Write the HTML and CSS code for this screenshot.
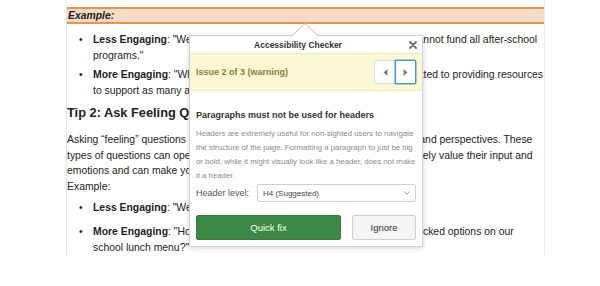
FILE: index.html
```html
<!DOCTYPE html>
<html lang="en">
<head>
<meta charset="utf-8">
<title>Accessibility Checker</title>
<link rel="stylesheet" href="styles.css">
</head>
<body>
<div class="page">
  <div class="example-bar">Example:</div>
  <ul class="tips first">
    <li><b>Less Engaging</b>: "We have very limited resources this fall, and so we cannot fund all after-school<br>programs."</li>
    <li><b>More Engaging</b>: "While our school budget is limited, we are still committed to providing resources<br>to support as many after-school programs as possible."</li>
  </ul>
  <h3 class="tip-title">Tip 2: Ask Feeling Questions</h3>
  <p class="lead">Asking “feeling” questions inspires people to openly share their own feelings and perspectives. These<br>types of questions can open up a real conversation and show that you genuinely value their input and<br>emotions and can make you feel more understood.</p>
  <p class="example-label">Example:</p>
  <ul class="tips second">
    <li><b>Less Engaging</b>: "We want to hear your thoughts on lunch."</li>
    <li><b>More Engaging</b>: "How would you really feel about any of the recently picked options on our<br>school lunch menu?"</li>
  </ul>
</div>

<div class="balloon">
  <svg class="balloon-arrow" width="28" height="14" viewBox="0 0 28 14">
    <polygon points="0,13.5 14,0.6 28,13.5 28,14 0,14" fill="#ffffff"/>
    <polyline points="0,13.5 14,0.6 28,13.5" fill="none" stroke="#bdbdbd" stroke-width="1"/>
  </svg>
  <div class="balloon-head">
    <span class="balloon-title">Accessibility Checker</span>
    <span class="balloon-close">
      <svg width="8" height="8" viewBox="0 0 8 8"><path d="M1 1 L7 7 M7 1 L1 7" stroke="#6e6e6e" stroke-width="1.8" stroke-linecap="round"/></svg>
    </span>
  </div>
  <div class="issue-bar">
    <span class="issue-label">Issue 2 of 3 (warning)</span>
    <div class="issue-nav">
      <button class="nav-btn prev" type="button">
        <svg width="5" height="7" viewBox="0 0 5 7"><polygon points="4.5,0 4.5,7 0.5,3.5" fill="#7d8062"/></svg>
      </button>
      <button class="nav-btn next" type="button">
        <svg width="5" height="7" viewBox="0 0 5 7"><polygon points="0.5,0 0.5,7 4.5,3.5" fill="#7d8062"/></svg>
      </button>
    </div>
  </div>
  <div class="balloon-body">
    <h4 class="issue-title">Paragraphs must not be used for headers</h4>
    <p class="issue-desc">Headers are extremely useful for non-sighted users to navigate<br>the structure of the page. Formatting a paragraph to just be big<br>or bold, while it might visually look like a header, does not make<br>it a header.</p>
    <div class="field">
      <span class="field-label">Header level:</span>
      <div class="select">
        <span>H4 (Suggested)</span>
        <svg width="6" height="4" viewBox="0 0 6 4"><polyline points="0.5,0.5 3,3 5.5,0.5" fill="none" stroke="#9a9a9a" stroke-width="0.9"/></svg>
      </div>
    </div>
    <div class="actions">
      <button class="btn btn-primary" type="button">Quick fix</button>
      <button class="btn btn-secondary" type="button">Ignore</button>
    </div>
  </div>
</div>
</body>
</html>
```
FILE: styles.css
```css
html, body {
  margin: 0;
  padding: 0;
  background: #ffffff;
}

body {
  font-family: "Liberation Sans", Arial, Helvetica, sans-serif;
  color: #222222;
  width: 600px;
  height: 286px;
  overflow: hidden;
}

.page {
  box-sizing: border-box;
  margin-left: 66px;
  width: 479px;
  height: 255px;
  padding-top: 7px;
  border-left: 1px solid #e6e6e6;
  border-right: 1px solid #ebebeb;
  font-size: 10.4px;
  white-space: nowrap;
  overflow: hidden;
}

.example-bar {
  height: 13px;
  line-height: 13px;
  padding-left: 1px;
  background: #f6dcc6;
  border-top: 2px solid #e8924c;
  border-bottom: 2px solid #e8924c;
  font-weight: bold;
  font-style: italic;
}

.tips {
  margin: 8px 0 0;
  padding-left: 26px;
}

.tips li {
  line-height: 16px;
}

.tips li::marker {
  content: "\2022\2003";
}

.first li + li {
  margin-top: 3px;
}

.tip-title {
  margin: 6px 0 0;
  font-size: 12.8px;
  line-height: 16px;
  font-weight: bold;
}

.lead {
  margin: 11px 0 0;
  line-height: 15.5px;
}

.example-label {
  margin: 0;
  line-height: 15.5px;
}

.second {
  margin-top: 5.5px;
}

.second li + li {
  margin-top: 8px;
}

/* Balloon */
.balloon {
  position: absolute;
  left: 189px;
  top: 35px;
  width: 234px;
  box-sizing: border-box;
  background: #ffffff;
  border: 1px solid #d2d2d2;
  box-shadow: 0 1px 5px rgba(0, 0, 0, 0.18);
  font-family: "Liberation Sans", Arial, Helvetica, sans-serif;
}

.balloon-arrow {
  position: absolute;
  left: 101px;
  top: -13px;
  display: block;
}

.balloon-head {
  display: flex;
  align-items: center;
  height: 17px;
}

.balloon-title {
  flex: 1;
  text-align: center;
  font-size: 8.5px;
  font-weight: bold;
  color: #333333;
}

.balloon-close {
  width: 14px;
  margin-right: 2px;
  display: flex;
  justify-content: center;
  align-items: center;
}

.balloon-close svg {
  display: block;
}

.issue-bar {
  box-sizing: border-box;
  height: 38px;
  display: flex;
  align-items: center;
  justify-content: space-between;
  padding: 0 6px;
  background: #fbf6d4;
  border-top: 1px solid #efe7c3;
  border-bottom: 1px solid #efe7c3;
}

.issue-label {
  font-size: 9px;
  font-weight: bold;
  color: #8b7e3e;
}

.issue-nav {
  display: flex;
}

.nav-btn {
  box-sizing: border-box;
  width: 21px;
  height: 24px;
  margin: 0;
  padding: 0;
  display: flex;
  align-items: center;
  justify-content: center;
  background: #ffffff;
  border: 1px solid #dddddd;
}

.nav-btn svg {
  display: block;
}

.nav-btn.prev {
  border-right: none;
  border-radius: 2px 0 0 2px;
}

.nav-btn.next {
  border: 1px solid #4f93cf;
  border-radius: 0 2px 2px 0;
  box-shadow: 0 0 0 0.5px #4f93cf;
}

.balloon-body {
  padding: 0 6px 6px;
}

.issue-title {
  margin: 18px 0 0;
  font-size: 9px;
  line-height: 12px;
  font-weight: bold;
  color: #333333;
}

.issue-desc {
  margin: 6px 0 0;
  font-size: 7.8px;
  line-height: 14px;
  color: #8a8a8a;
  white-space: nowrap;
}

.field {
  display: flex;
  align-items: center;
  margin-top: 1px;
  height: 18px;
}

.field-label {
  width: 61px;
  font-size: 9px;
  color: #555555;
}

.select {
  flex: 1;
  box-sizing: border-box;
  height: 18px;
  display: flex;
  align-items: center;
  justify-content: space-between;
  padding: 0 5px 0 5px;
  border: 1px solid #d0d0d0;
  border-radius: 2px;
  background: #ffffff;
  font-size: 8px;
  color: #444444;
}

.select svg {
  display: block;
}

.actions {
  display: flex;
  gap: 11px;
  margin-top: 13px;
}

.btn {
  box-sizing: border-box;
  height: 25px;
  margin: 0;
  padding: 0;
  border-radius: 2px;
  font-family: "Liberation Sans", Arial, Helvetica, sans-serif;
  font-size: 9.5px;
}

.btn-primary {
  width: 145px;
  background: #3b8944;
  border: 1px solid #357c3d;
  color: #ffffff;
}

.btn-secondary {
  flex: 1;
  background: #f5f5f5;
  border: 1px solid #cfcfcf;
  color: #333333;
}
```
